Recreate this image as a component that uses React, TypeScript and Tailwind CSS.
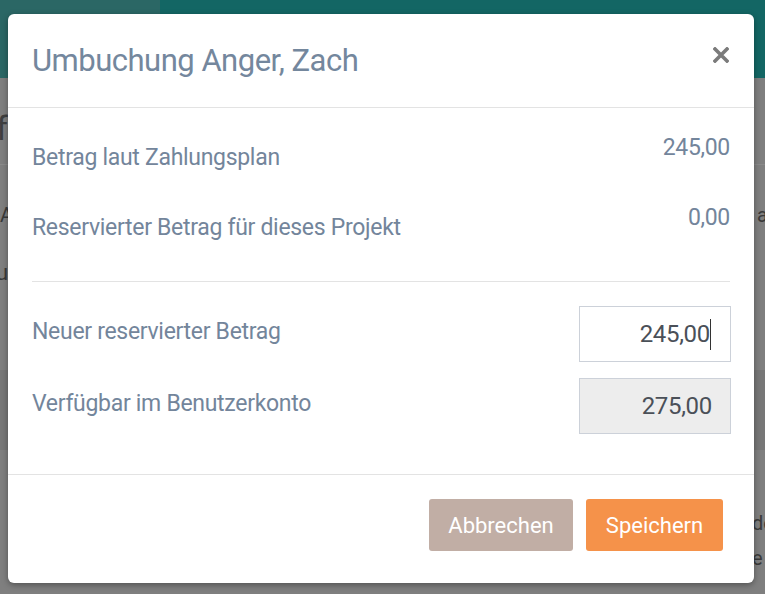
import React from "react";

const font = { fontFamily: "Roboto, 'Liberation Sans', sans-serif" };

function Row({ label, value }: { label: string; value: string }) {
  return (
    <div className="flex h-[70px] items-start justify-between">
      <span className="mt-[26px] text-[23px] leading-[28px] tracking-[-0.3px] text-[#73859b]">{label}</span>
      <span className="mt-[16px] text-[23px] leading-[28px] tracking-[-0.3px] text-[#73859b]">{value}</span>
    </div>
  );
}

export default function App() {
  return (
    <div className="relative h-[594px] w-[765px] overflow-hidden bg-[#7f7f7f]" style={font}>
      {/* Hintergrundseite unter dem Overlay */}
      <div className="flex h-[78px] bg-[#136664]">
        <div className="w-[160px] bg-[#2b6765]" />
      </div>
      <div className="h-[87px] border-b border-[#8a8a8a]">
        <span className="ml-[-4px] block pt-[30px] text-[34px] leading-[40px] text-[#3f3f3f]">f</span>
      </div>
      <div className="absolute left-[757px] top-[200px] text-[20px] text-[#3a3a3a]">a</div>
      <div className="absolute left-[0px] top-[200px] text-[20px] text-[#3a3a3a]">A</div>
      <div className="absolute left-[-4px] top-[256px] text-[22px] text-[#3a3a3a]">u</div>
      <div className="absolute left-0 top-[370px] h-[80px] w-full bg-[#777777]" />
      <div className="absolute left-[752px] top-[508px] text-[20px] text-[#3a3a3a]">de</div>
      <div className="absolute left-[752px] top-[543px] text-[20px] text-[#3a3a3a]">e</div>

      {/* Dialog */}
      <div className="absolute left-[8px] top-[14px] flex h-[569px] w-[746px] flex-col rounded-[6px] bg-white shadow-[0_2px_6px_rgba(0,0,0,0.35)]">
        <div className="flex h-[94px] shrink-0 items-center justify-between border-b border-[#e3e3e3] px-[24px]">
          <h2 className="text-[31px] font-normal leading-[36px] tracking-[-0.5px] text-[#74879d]">Umbuchung Anger, Zach</h2>
          <button type="button" className="mr-[1px] mt-[-12px]" aria-label="Schließen">
            <svg width="16" height="16" viewBox="0 0 16 16">
              <path d="M2 2L14 14M14 2L2 14" stroke="#7b7b7b" strokeWidth="3.6" strokeLinecap="square" />
            </svg>
          </button>
        </div>

        <div className="px-[24px] pt-[10px]">
          <Row label="Betrag laut Zahlungsplan" value="245,00" />
          <Row label="Reservierter Betrag für dieses Projekt" value="0,00" />
          <div className="mt-[23px] border-t border-[#e3e3e3]" />

          <div className="mt-[24px] flex items-center justify-between">
            <span className="mt-[-4px] text-[23px] leading-[28px] tracking-[-0.3px] text-[#73859b]">Neuer reservierter Betrag</span>
            <div className="mr-[-1px] flex h-[56px] w-[152px] items-center justify-end border border-[#ccd1d9] bg-white pr-[19px]">
              <span className="text-[24px] tracking-[-0.3px] text-[#4a5058]">245,00</span>
              <span className="h-[31px] w-[1px] bg-[#333]" />
            </div>
          </div>
          <div className="mt-[16px] flex items-center justify-between">
            <span className="mt-[-4px] text-[23px] leading-[28px] tracking-[-0.3px] text-[#73859b]">Verfügbar im Benutzerkonto</span>
            <div className="mr-[-1px] flex h-[56px] w-[152px] items-center justify-end border border-[#ccd1d9] bg-[#ededed] pr-[18px]">
              <span className="text-[24px] tracking-[-0.3px] text-[#4a5058]">275,00</span>
            </div>
          </div>
        </div>

        <div className="mt-auto flex h-[109px] items-start justify-end gap-[13px] border-t border-[#e3e3e3] pr-[31px] pt-[24px]">
          <button type="button" className="h-[52px] w-[144px] rounded-[3px] bg-[#c1aea5] text-[22px] text-white">
            Abbrechen
          </button>
          <button type="button" className="h-[52px] w-[137px] rounded-[3px] bg-[#f5924a] text-[22px] text-white">
            Speichern
          </button>
        </div>
      </div>
    </div>
  );
}
